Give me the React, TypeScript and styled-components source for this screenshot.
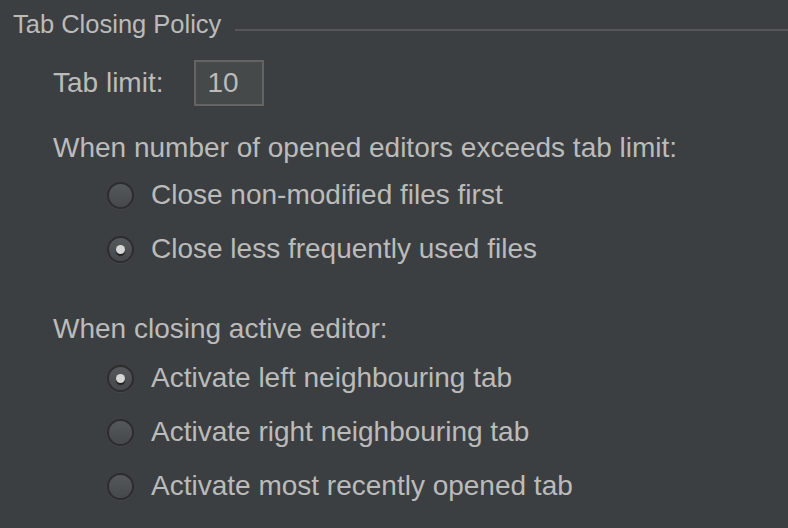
import React from "react";
import styled, { createGlobalStyle } from "styled-components";

const Global = createGlobalStyle`
  html, body { margin: 0; padding: 0; background: #3c3f41; }
  body { width: 788px; height: 528px; overflow: hidden; }
`;

const Page = styled.div`
  width: 788px;
  height: 528px;
  background: #3c3f41;
  color: #bbbbbb;
  font-family: "Liberation Sans", Arial, sans-serif;
  font-size: 28px;
  box-sizing: border-box;
  padding: 6px 0 0 13px;
`;

const TitleRow = styled.div`
  display: flex;
  align-items: center;
  gap: 14px;
  height: 36px;
`;

const Title = styled.span`
  font-size: 25.5px;
  white-space: nowrap;
`;

const Rule = styled.div`
  flex: 1;
  height: 2px;
  background: #555759;
  margin-top: 12px;
`;

const Body = styled.div`
  padding-left: 40px;
  display: flex;
  flex-direction: column;
`;

const LimitRow = styled.div`
  display: flex;
  align-items: center;
  gap: 31px;
  margin-top: 18px;
`;

const Input = styled.div`
  width: 70px;
  height: 46px;
  box-sizing: border-box;
  border: 2px solid #646464;
  background: #45494a;
  display: flex;
  align-items: center;
  padding-left: 11px;
`;

const Heading = styled.div<{ $top: number }>`
  margin-top: ${(p) => p.$top}px;
  height: 36px;
  line-height: 36px;
`;

const Options = styled.div`
  display: flex;
  flex-direction: column;
  padding-left: 54px;
`;

const Option = styled.label<{ $top: number }>`
  display: flex;
  align-items: center;
  gap: 17px;
  height: 36px;
  margin-top: ${(p) => p.$top}px;
`;

const Radio = styled.span<{ $on: boolean }>`
  width: 27px;
  height: 27px;
  box-sizing: border-box;
  border-radius: 50%;
  border: 2px solid #2b2d2e;
  background: linear-gradient(#55585a, #46494b);
  box-shadow: 0 1px 1px rgba(80, 80, 80, 0.5);
  display: flex;
  align-items: center;
  justify-content: center;
  &::after {
    content: "";
    display: ${(p) => (p.$on ? "block" : "none")};
    width: 9px;
    height: 9px;
    border-radius: 50%;
    background: #d6d6d6;
    box-shadow: 0 2px 1px rgba(0, 0, 0, 0.6);
  }
`;

type Opt = { label: string; on: boolean };

const group1: Opt[] = [
  { label: "Close non-modified files first", on: false },
  { label: "Close less frequently used files", on: true },
];
const group2: Opt[] = [
  { label: "Activate left neighbouring tab", on: true },
  { label: "Activate right neighbouring tab", on: false },
  { label: "Activate most recently opened tab", on: false },
];

export default function App() {
  return (
    <>
      <Global />
      <Page>
        <TitleRow>
          <Title>Tab Closing Policy</Title>
          <Rule />
        </TitleRow>
        <Body>
          <LimitRow>
            <span>Tab limit:</span>
            <Input>10</Input>
          </LimitRow>
          <Heading $top={24}>When number of opened editors exceeds tab limit:</Heading>
          <Options>
            {group1.map((o, i) => (
              <Option key={o.label} $top={i === 0 ? 11 : 18}>
                <Radio $on={o.on} />
                <span>{o.label}</span>
              </Option>
            ))}
          </Options>
          <Heading $top={44}>When closing active editor:</Heading>
          <Options>
            {group2.map((o, i) => (
              <Option key={o.label} $top={i === 0 ? 13 : 18}>
                <Radio $on={o.on} />
                <span>{o.label}</span>
              </Option>
            ))}
          </Options>
        </Body>
      </Page>
    </>
  );
}
